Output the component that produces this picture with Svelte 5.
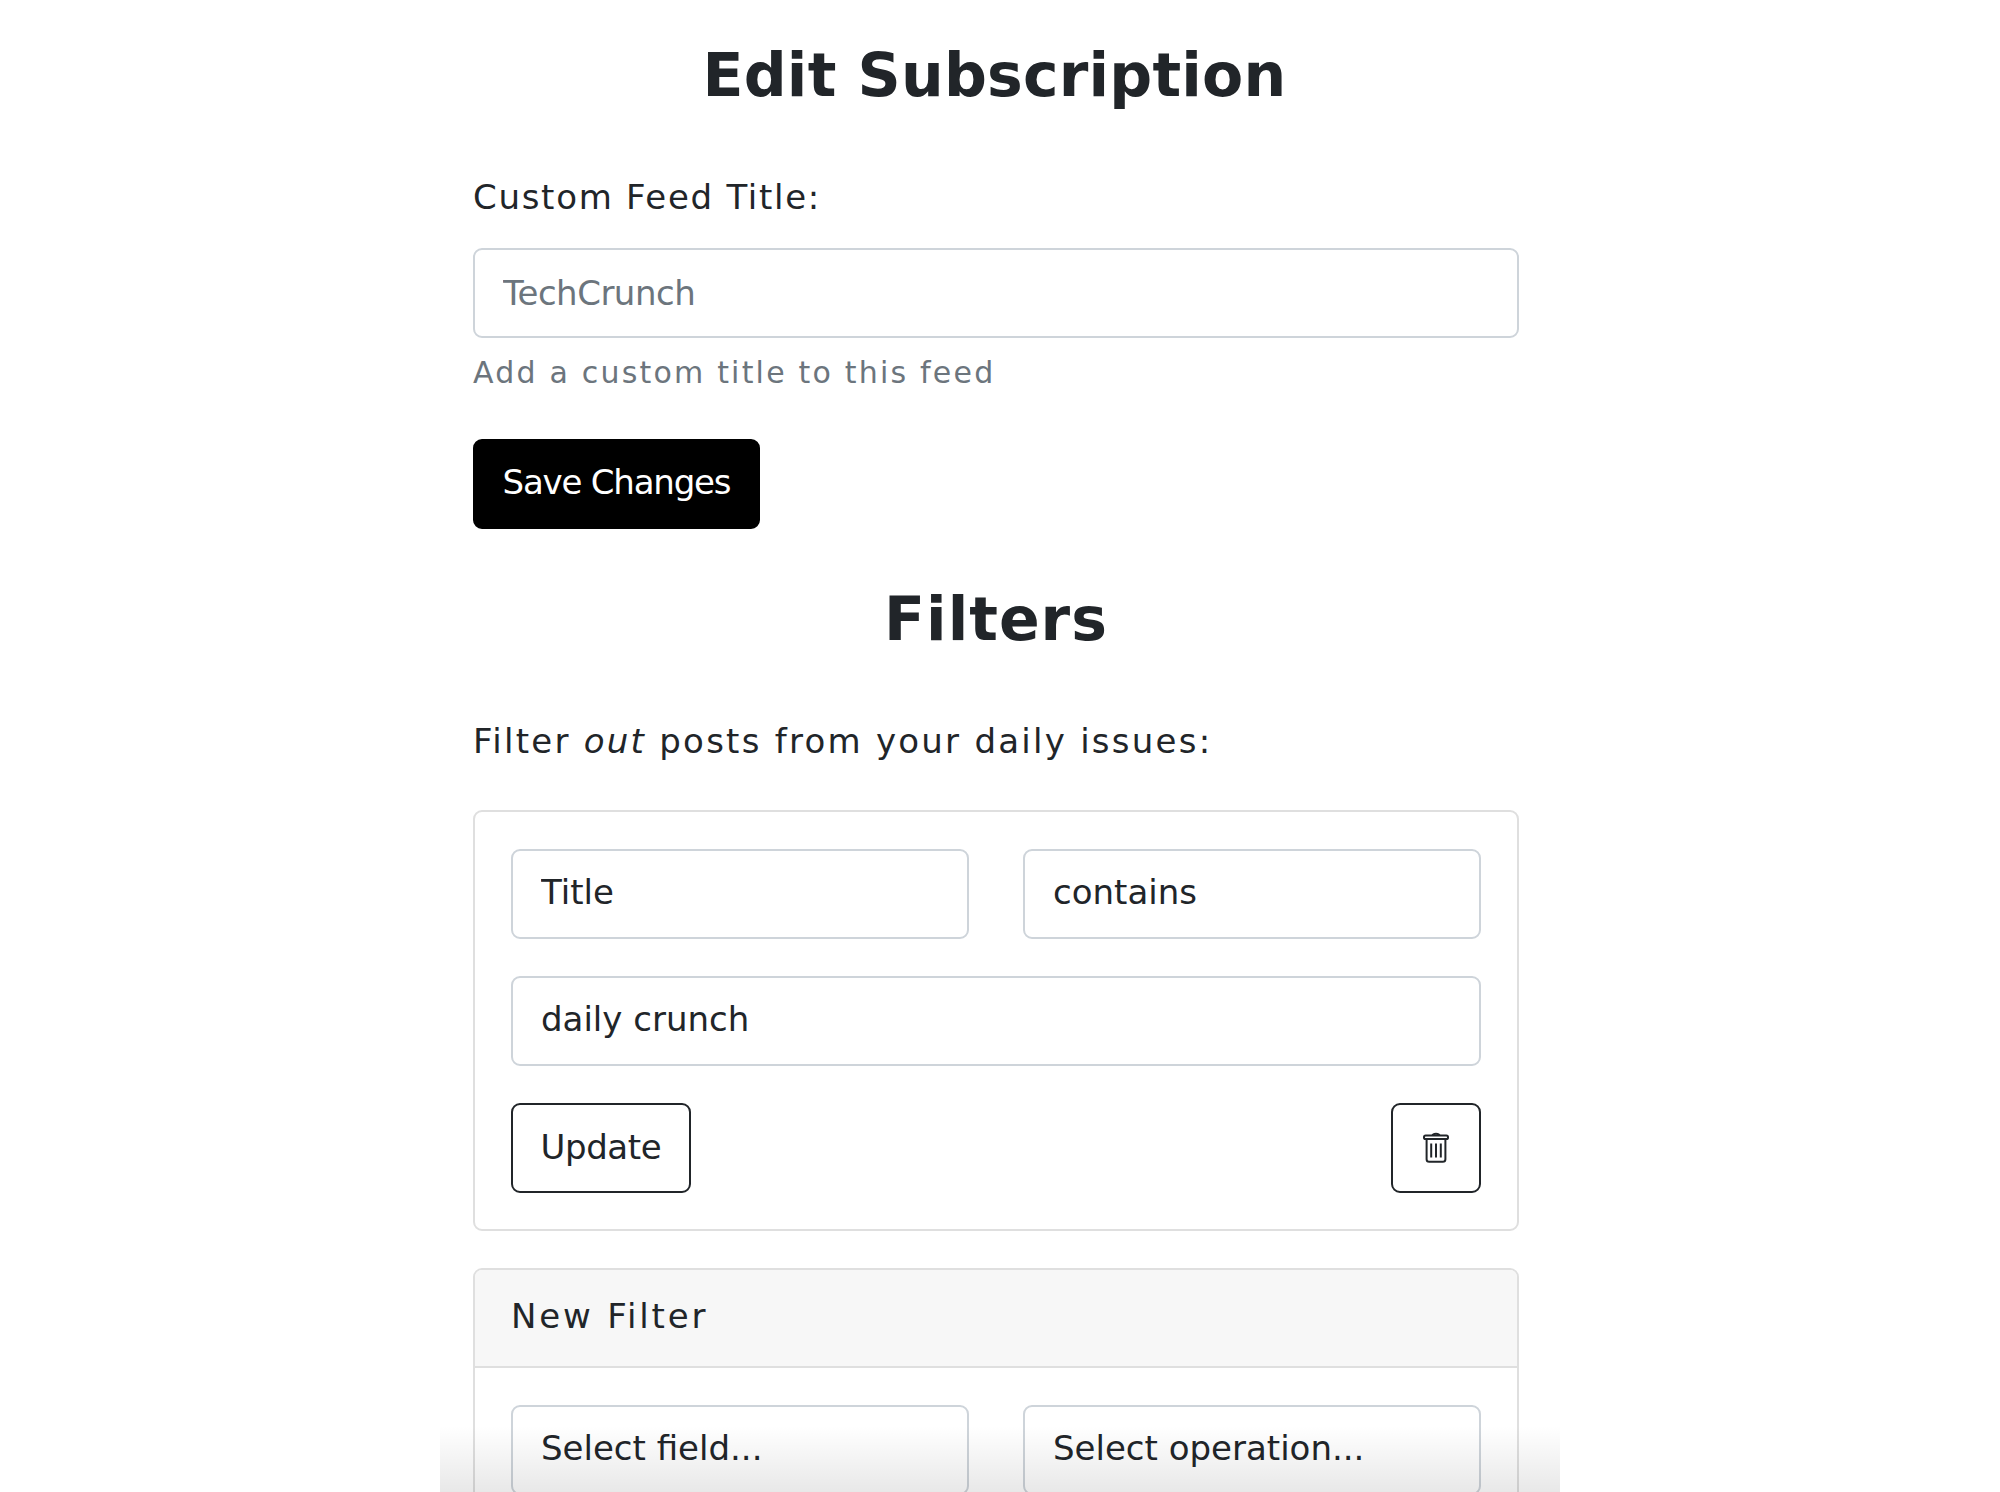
<script lang="ts">
	let feedTitle = $state('');
	let newField = $state('');
	let newOp = $state('');

	const fields = ['Title', 'Author', 'Content'];
	const ops = ['contains', 'does not contain', 'is'];
</script>

<div class="screen">
	<main class="page">
		<h1>Edit Subscription</h1>

		<form class="group" onsubmit={(e) => e.preventDefault()}>
			<label for="feed-title">Custom Feed Title:</label>
			<input id="feed-title" class="control" placeholder="TechCrunch" bind:value={feedTitle} />
			<small>Add a custom title to this feed</small>
			<button class="btn primary" type="submit">Save Changes</button>
		</form>

		<h2>Filters</h2>
		<p class="lead">Filter <em>out</em> posts from your daily issues:</p>

		<section class="card">
			<div class="card-body">
				<div class="row">
					<select class="control">
						{#each fields as f}<option>{f}</option>{/each}
					</select>
					<select class="control">
						{#each ops as o}<option>{o}</option>{/each}
					</select>
				</div>
				<input class="control" value="daily crunch" />
				<div class="actions">
					<button class="btn outline" type="button">Update</button>
					<button class="btn outline icon" type="button" aria-label="Delete filter">
						<svg viewBox="0 0 26 31" width="26" height="31" fill="none" stroke="currentColor" aria-hidden="true">
							<path d="M9.5 3.5 C10 1.2 16 1.2 16.5 3.5" stroke-width="2" />
							<rect x="1" y="3.5" width="24" height="3.6" rx="1.6" stroke-width="2" />
							<path d="M3.6 7.2V27.2a2.6 2.6 0 0 0 2.6 2.6h13.6a2.6 2.6 0 0 0 2.6-2.6V7.2" stroke-width="2" />
							<path d="M8.2 11.5V25.5M13 11.5V25.5M17.8 11.5V25.5" stroke-width="2" />
						</svg>
					</button>
				</div>
			</div>
		</section>

		<section class="card new">
			<header>New Filter</header>
			<div class="card-body">
				<div class="row">
					<select class="control" bind:value={newField}>
						<option value="">Select field...</option>
						{#each fields as f}<option>{f}</option>{/each}
					</select>
					<select class="control" bind:value={newOp}>
						<option value="">Select operation...</option>
						{#each ops as o}<option>{o}</option>{/each}
					</select>
				</div>
			</div>
		</section>
	</main>
	<div class="fade"></div>
</div>

<style>
	:global(body) {
		background: #fff;
	}

	.screen {
		position: relative;
		height: 1492px;
		overflow: hidden;
		color: #212529;
		font-family: 'DejaVu Sans', sans-serif;
		font-size: 34px;
	}

	.page {
		width: 1046px;
		margin-left: 473px;
		padding-top: 35px;
	}

	h1,
	h2 {
		margin: 0;
		text-align: center;
		font-weight: 700;
		font-size: 60px;
		line-height: 80px;
	}
	h1 {
		margin-bottom: 54px;
		padding-right: 3px;
		letter-spacing: 0.2px;
	}
	h2 {
		margin-top: 50px;
		margin-bottom: 54px;
		letter-spacing: 1px;
	}

	.group {
		display: flex;
		flex-direction: column;
		align-items: flex-start;
	}

	label {
		line-height: 56px;
		margin-bottom: 23px;
		letter-spacing: 1.7px;
	}

	.control {
		box-sizing: border-box;
		display: block;
		width: 100%;
		height: 90px;
		padding: 0 28px;
		border: 2px solid #ced4da;
		border-radius: 9px;
		background: #fff;
		color: #212529;
		font: inherit;
		appearance: none;
		-webkit-appearance: none;
		outline: none;
	}
	.control::placeholder {
		color: #6c757d;
		opacity: 1;
		letter-spacing: -0.5px;
	}
	.card .control {
		padding-bottom: 4px;
	}

	small {
		margin-top: 12px;
		font-size: 30px;
		line-height: 46px;
		letter-spacing: 2.2px;
		color: #6c757d;
		margin-bottom: 43px;
	}

	.btn {
		box-sizing: border-box;
		height: 90px;
		padding: 0 27.5px 3px;
		border-radius: 9px;
		font: inherit;
		letter-spacing: -0.4px;
	}
	.primary {
		background: #000;
		border: 2px solid #000;
		color: #fff;
		padding-bottom: 5px;
		letter-spacing: -1.2px;
	}
	.outline {
		background: #fff;
		border: 2px solid #212529;
		color: #212529;
	}
	.icon {
		width: 90px;
		padding: 0 0 2px;
		display: flex;
		align-items: center;
		justify-content: center;
	}

	.lead {
		margin: 0 0 41px;
		line-height: 56px;
		letter-spacing: 2.25px;
	}
	em {
		font-style: italic;
	}

	.card {
		border: 2px solid #dfdfdf;
		border-radius: 9px;
		overflow: hidden;
	}
	.card-body {
		padding: 37px 36px 36px;
		display: flex;
		flex-direction: column;
		gap: 37px;
	}
	.row {
		display: grid;
		grid-template-columns: 458px 458px;
		gap: 54px;
	}
	.actions {
		display: flex;
		justify-content: space-between;
	}

	.new {
		margin-top: 37px;
	}
	.new header {
		display: flex;
		align-items: center;
		padding: 0 36px 4px;
		height: 92px;
		background: #f7f7f7;
		border-bottom: 2px solid #dfdfdf;
		letter-spacing: 2.8px;
	}

	.fade {
		position: absolute;
		left: 440px;
		bottom: 0;
		width: 1120px;
		height: 66px;
		background: linear-gradient(to bottom, rgba(0, 0, 0, 0), rgba(0, 0, 0, 0.09));
		pointer-events: none;
	}
</style>
